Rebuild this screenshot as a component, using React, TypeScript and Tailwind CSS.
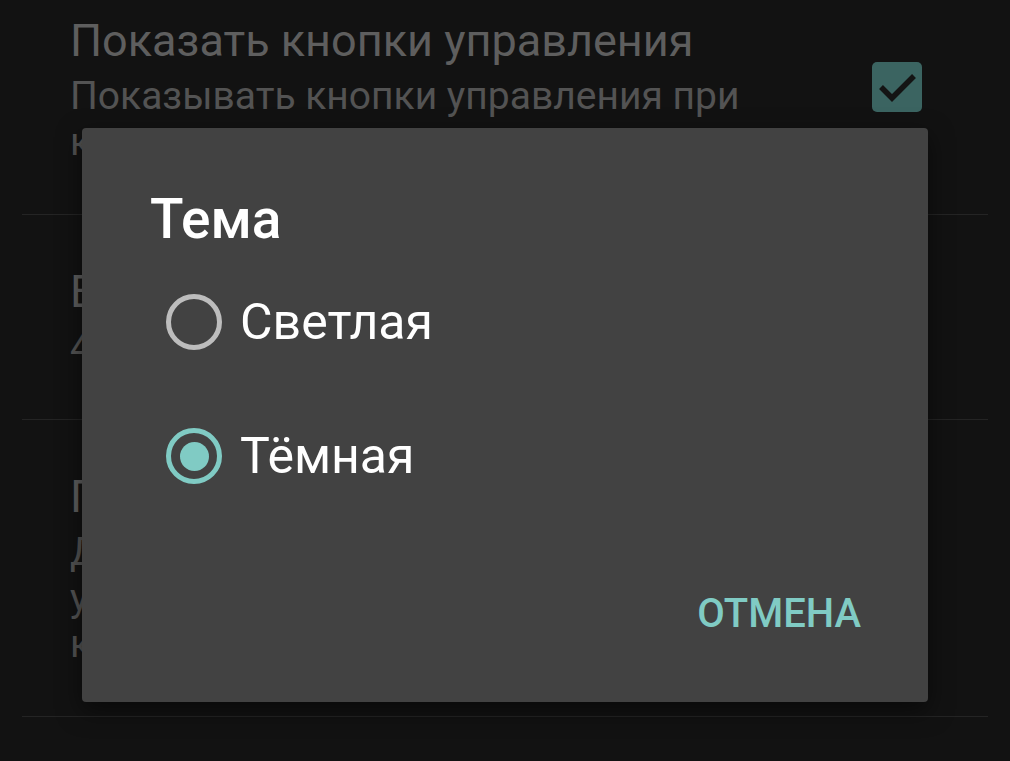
import { useState } from "react";

interface PrefRowProps {
  title: string;
  summary: string[];
  checked?: boolean;
}

const PrefRow = ({ title, summary, checked }: PrefRowProps) => {
  return (
    <div className="flex items-center border-b border-[#242424] pl-[48px] pr-[66px] pt-[44px] pb-[49px]">
      <div className="flex-1 min-w-0">
        <p className="text-[45px] leading-[65px] text-[#5e5e5e] whitespace-nowrap">
          {title}
        </p>
        {summary.map((line) => (
          <p
            key={line}
            className="text-[39px] leading-[46px] text-[#535353] whitespace-nowrap"
          >
            {line}
          </p>
        ))}
      </div>
      {checked !== undefined && (
        <div className="w-[50px] h-[50px] rounded-[5px] bg-[#3b6461] flex items-center justify-center shrink-0">
          <svg width="50" height="50" viewBox="0 0 50 50">
            <path
              d="M9 25 L20 36 L42 14"
              fill="none"
              stroke="#141414"
              strokeWidth="5.5"
            />
          </svg>
        </div>
      )}
    </div>
  );
};

const Radio = ({ selected }: { selected: boolean }) => (
  <div
    className={`w-[56px] h-[56px] rounded-full border-[5px] flex items-center justify-center shrink-0 ${
      selected ? "border-[#80cbc4]" : "border-[#bdbdbd]"
    }`}
  >
    {selected && <div className="w-[29px] h-[29px] rounded-full bg-[#80cbc4]" />}
  </div>
);

export default function App() {
  const [theme, setTheme] = useState<string>("dark");
  const options = [
    { id: "light", label: "Светлая" },
    { id: "dark", label: "Тёмная" },
  ];

  return (
    <div className="relative w-[1010px] h-[761px] overflow-hidden bg-[#121212] font-['Roboto',sans-serif]">
      <div className="px-[22px] -mt-[36px]">
        <PrefRow
          title="Показать кнопки управления"
          summary={["Показывать кнопки управления при", "касании экрана"]}
          checked
        />
        <PrefRow title="Время скрытия кнопок" summary={["4 секунды"]} />
        <PrefRow
          title="Перемотка двойным нажатием"
          summary={[
            "Двойное нажатие по краю экрана",
            "управляет перемоткой назад и",
            "к следующему фрагменту",
          ]}
        />
      </div>

      <div className="absolute left-[82px] top-[128px] w-[846px] h-[574px] bg-[#424242] rounded-[4px] shadow-[0_8px_24px_rgba(0,0,0,0.5)] flex flex-col">
        <h2 className="pl-[68px] pt-[59px] text-[55px] leading-[64px] font-medium text-white">
          Тема
        </h2>
        <div className="mt-[4px] pl-[84px]">
          {options.map((o) => (
            <div
              key={o.id}
              onClick={() => setTheme(o.id)}
              className="h-[134px] flex items-center gap-[18px] cursor-pointer"
            >
              <Radio selected={theme === o.id} />
              <span className="text-[50px] leading-[50px] text-white">{o.label}</span>
            </div>
          ))}
        </div>
        <div className="mt-[71px] flex justify-end pr-[67px]">
          <button className="text-[40px] leading-[40px] font-medium text-[#80cbc4]">
            ОТМЕНА
          </button>
        </div>
      </div>
    </div>
  );
}
